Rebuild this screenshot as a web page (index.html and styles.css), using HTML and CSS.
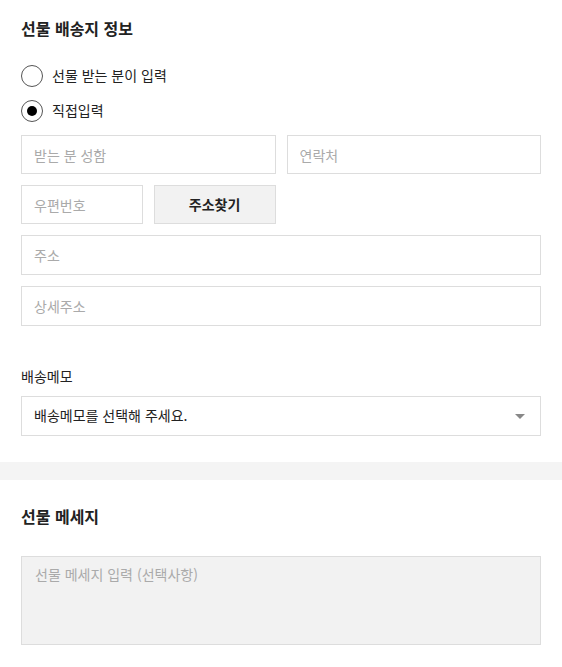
FILE: index.html
```html
<!DOCTYPE html>
<html lang="ko">
<head>
	<meta charset="utf-8" />
	<meta name="viewport" content="width=device-width, initial-scale=1.0" />
	<title>선물 배송지 정보</title>
	<link rel="stylesheet" href="styles.css">
</head>
<body>
	<section class="panel panel--address">
		<h2 class="panel__title">선물 배송지 정보</h2>

		<div class="choice">
			<label class="choice__item">
				<input type="radio" name="addrType" value="receiver">
				<span>선물 받는 분이 입력</span>
			</label>
			<label class="choice__item">
				<input type="radio" name="addrType" value="direct" checked>
				<span>직접입력</span>
			</label>
		</div>

		<div class="addr-grid">
			<input class="field span-2" type="text" placeholder="받는 분 성함">
			<input class="field span-2" type="tel" placeholder="연락처">
			<input class="field" type="text" placeholder="우편번호">
			<button class="btn-find" type="button">주소찾기</button>
			<input class="field span-4" type="text" placeholder="주소">
			<input class="field span-4" type="text" placeholder="상세주소">
		</div>

		<label class="memo__label" for="memo">배송메모</label>
		<div class="select-wrap">
			<select id="memo" class="select">
				<option>배송메모를 선택해 주세요.</option>
				<option>문 앞에 놓아주세요.</option>
				<option>경비실에 맡겨주세요.</option>
				<option>배송 전 연락 바랍니다.</option>
			</select>
		</div>
	</section>

	<div class="gap-band"></div>

	<section class="panel panel--message">
		<h2 class="panel__title">선물 메세지</h2>
		<textarea class="message" placeholder="선물 메세지 입력 (선택사항)"></textarea>
	</section>
</body>
</html>
```

FILE: styles.css
```css
* {
	box-sizing: border-box;
}
body {
	margin: 0;
	font: 14px/1.4 "Noto Sans CJK KR", "Noto Sans", sans-serif;
	color: #222;
	background: #fff;
}

.panel {
	padding: 17px 21px 26px;
}
.panel__title {
	margin: 0;
	font-size: 16px;
	font-weight: 700;
	line-height: 22px;
	color: #222;
}

/* radio buttons */
.choice {
	display: flex;
	flex-direction: column;
	gap: 13px;
	margin-top: 26px;
}
.choice__item {
	display: flex;
	align-items: center;
	gap: 9px;
	font-size: 14px;
	color: #222;
	cursor: pointer;
}
.choice__item input {
	appearance: none;
	-webkit-appearance: none;
	margin: 0;
	width: 22px;
	height: 22px;
	border: 1px solid #555;
	border-radius: 50%;
	background: #fff;
	display: grid;
	place-content: center;
}
.choice__item input:checked::before {
	content: "";
	width: 10px;
	height: 10px;
	border-radius: 50%;
	background: #000;
}

/* address inputs */
.addr-grid {
	display: grid;
	grid-template-columns: repeat(4, 1fr);
	gap: 11px;
	margin-top: 13px;
}
.span-2 { grid-column: span 2; }
.span-4 { grid-column: span 4; }

.field {
	height: 39px;
	width: 100%;
	border: 1px solid #ddd;
	background: #fff;
	padding: 0 12px;
	font: inherit;
	color: #222;
	outline: none;
}
.field.span-4 {
	height: 40px;
}
.field::placeholder {
	color: #aaa;
}
.btn-find {
	height: 39px;
	border: 1px solid #ddd;
	background: #f2f2f2;
	font: inherit;
	font-weight: 700;
	color: #222;
	cursor: pointer;
}

/* delivery memo */
.memo__label {
	display: block;
	margin-top: 40px;
	font-size: 14px;
	line-height: 20px;
	color: #222;
}
.select-wrap {
	position: relative;
	margin-top: 10px;
}
.select-wrap::after {
	content: "";
	position: absolute;
	right: 16px;
	top: 50%;
	margin-top: -2px;
	border-left: 5px solid transparent;
	border-right: 5px solid transparent;
	border-top: 5px solid #888;
	pointer-events: none;
}
.select {
	appearance: none;
	-webkit-appearance: none;
	width: 100%;
	height: 40px;
	border: 1px solid #ddd;
	border-radius: 0;
	background: #fff;
	padding: 0 12px;
	font: inherit;
	color: #222;
	outline: none;
}

.gap-band {
	height: 18px;
	background: #f4f4f4;
}

/* gift message */
.panel--message {
	padding-top: 25px;
}
.message {
	display: block;
	width: 100%;
	height: 89px;
	margin-top: 29px;
	border: 1px solid #ddd;
	background: #f2f2f2;
	padding: 8px 13px;
	font: inherit;
	color: #222;
	resize: none;
	outline: none;
}
.message::placeholder {
	color: #aaa;
}
```
